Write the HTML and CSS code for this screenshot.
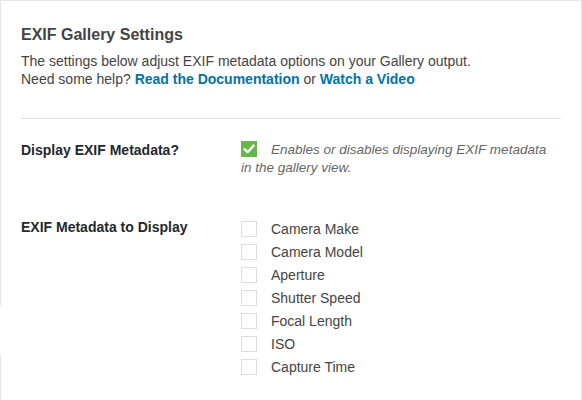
FILE: index.html
```html
<!DOCTYPE html>
<html lang="en">
<head>
  <meta charset="UTF-8" />
  <title>EXIF Gallery Settings</title>
  <link rel="stylesheet" href="styles.css">
</head>
<body>
  <div class="panel">
    <h2 class="title">EXIF Gallery Settings</h2>
    <p class="intro">
      The settings below adjust EXIF metadata options on your Gallery output.<br>
      Need some help? <a href="#">Read the Documentation</a> or <a href="#">Watch a Video</a>
    </p>
    <hr class="divider">

    <div class="setting">
      <div class="setting-label">Display EXIF Metadata?</div>
      <div class="setting-field">
        <p class="desc"><span class="check checked"><svg width="12" height="10" viewBox="0 0 12 10"><path d="M1.5 5.2 L4.6 8.2 L10.6 1.6" fill="none" stroke="#fff" stroke-width="2.4" stroke-linecap="round" stroke-linejoin="round"/></svg></span><em>Enables or disables displaying EXIF metadata in the gallery view.</em></p>
      </div>
    </div>

    <div class="setting">
      <div class="setting-label">EXIF Metadata to Display</div>
      <div class="setting-field">
        <ul class="options">
          <li><span class="check"></span>Camera Make</li>
          <li><span class="check"></span>Camera Model</li>
          <li><span class="check"></span>Aperture</li>
          <li><span class="check"></span>Shutter Speed</li>
          <li><span class="check"></span>Focal Length</li>
          <li><span class="check"></span>ISO</li>
          <li><span class="check"></span>Capture Time</li>
        </ul>
      </div>
    </div>
  </div>
</body>
</html>
```

FILE: styles.css
```css
/* Reset */
* {
  margin: 0;
  padding: 0;
  box-sizing: border-box;
}

body {
  font-family: 'Liberation Sans', Arial, sans-serif;
  font-size: 14px;
  color: #444;
  background: #fff;
}

/* Panel - left edge drawn as a strip so the gap in it can be kept */
.panel {
  height: 400px;
  border-top: 1px solid #e5e5e5;
  border-right: 1px solid #e5e5e5;
  background: linear-gradient(to bottom, #e5e5e5 0, #e5e5e5 305px, #fff 305px, #fff 354px, #e5e5e5 354px) left top / 1px 100% no-repeat;
  padding: 22px 20px 0 21px;
}

.title {
  font-size: 16px;
  line-height: 23px;
  font-weight: bold;
  color: #444;
}

.intro {
  margin-top: 6px;
  line-height: 18px;
}

.intro a {
  color: #0073aa;
  font-weight: bold;
  text-decoration: none;
}

.divider {
  border: none;
  border-top: 1px solid #ddd;
  margin-top: 30px;
}

/* Setting rows */
.setting {
  display: flex;
  padding-top: 22px;
}

.setting + .setting {
  padding-top: 41px;
}

.setting-label {
  width: 220px;
  flex-shrink: 0;
  font-weight: bold;
  color: #23282d;
  line-height: 18px;
}

.setting-field {
  flex: 1;
  padding-right: 10px;
}

.desc {
  font-size: 13.5px;
  line-height: 18px;
  color: #666;
}

.desc em {
  font-style: italic;
}

/* Checkboxes */
.check {
  display: inline-block;
  width: 16px;
  height: 16px;
  border: 1px solid #ddd;
  background: #fff;
  vertical-align: -3px;
  margin-right: 14px;
}

.check.checked {
  background: #66b846;
  border-color: #66b846;
  position: relative;
}

.check.checked svg {
  position: absolute;
  left: 1px;
  top: 2px;
}

.options {
  list-style: none;
}

.options li {
  line-height: 23px;
  color: #444;
}
```
